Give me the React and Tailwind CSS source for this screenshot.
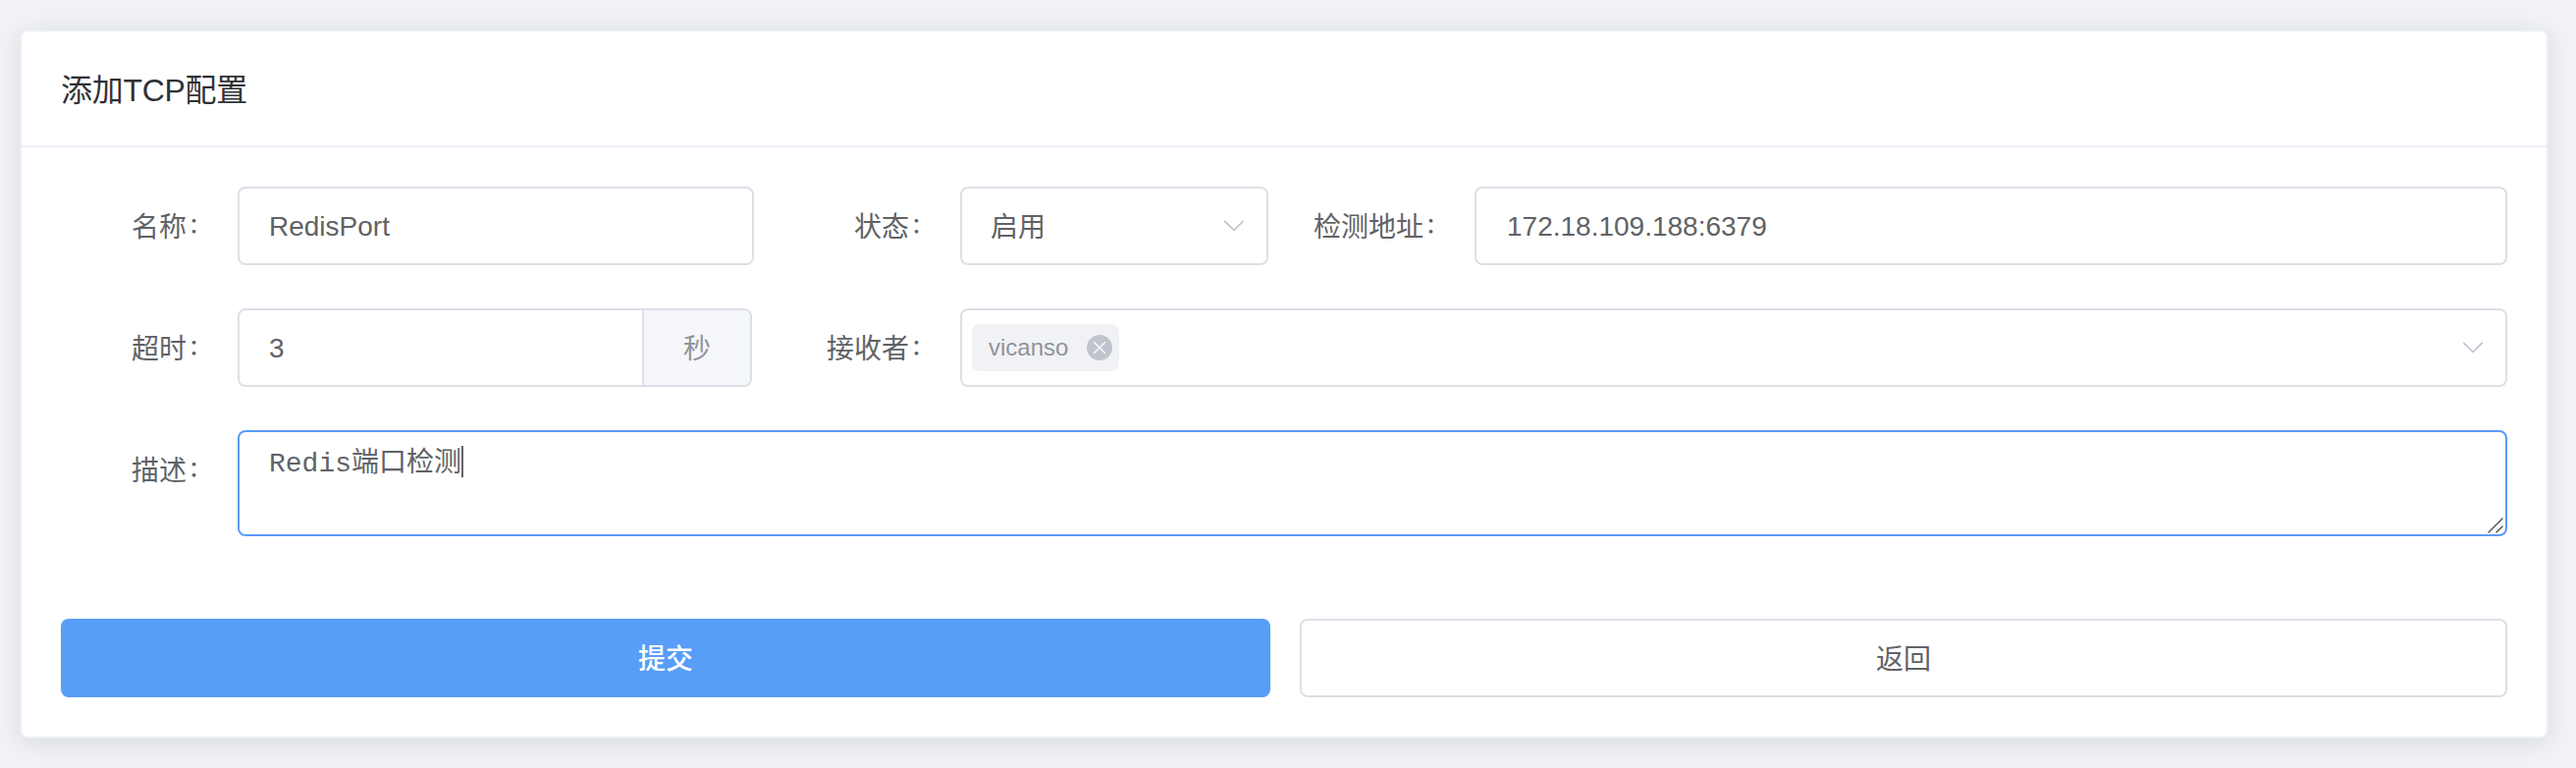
import React from "react";

const box = "h-20 rounded-lg border-2 border-[#dcdfe6] bg-white";

function Label({ className, children }) {
  return (
    <div className={`flex h-20 shrink-0 items-center justify-end pt-[3px] pr-6 ${className}`}>
      <span>{children}</span>
      <span className="w-7 pb-1 pl-0.5 text-[22px] font-medium">：</span>
    </div>
  );
}

function Chevron() {
  return (
    <svg className="h-7 w-7 shrink-0" viewBox="0 0 28 28" fill="none" stroke="#c0c4cc" strokeWidth="1.7" strokeLinecap="round" strokeLinejoin="round">
      <path d="M5.8 9.3 15 18.5l9.2-9.2" />
    </svg>
  );
}

export default function App() {
  return (
    <div className="h-[782px] w-[2624px] overflow-hidden bg-[#f0f2f5] pt-[30px] pl-5 font-['Liberation_Sans','Noto_Sans_CJK_SC',sans-serif] text-[28px] leading-10 text-[#606266]">
      <div className="h-[722px] w-[2576px] rounded-lg border-2 border-[#ebeef5] bg-white shadow-[0_4px_24px_0_rgba(0,0,0,0.1)]">
        <div className="flex h-[118px] items-center border-b-2 border-[#ebeef5] px-10 pt-[3px] text-[32px] tracking-[-0.3px] text-[#303133]">添加TCP配置</div>
        <div className="flex flex-col px-10 pt-10">
          <div className="flex">
            <Label className="w-[180px]">名称</Label>
            <div className={`${box} flex w-[526px] items-center px-[30px] pt-0.5`}>RedisPort</div>
            <Label className="w-[210px]">状态</Label>
            <div className={`${box} flex w-[314px] items-center justify-between pr-5 pl-[29px]`}>
              <span className="pt-[3px]">启用</span>
              <Chevron />
            </div>
            <Label className="w-[210px]">检测地址</Label>
            <div className={`${box} flex flex-1 items-center px-[31px] pt-0.5`}>172.18.109.188:6379</div>
          </div>

          <div className="mt-11 flex">
            <Label className="w-[180px]">超时</Label>
            <div className={`${box} flex w-[524px] overflow-hidden`}>
              <div className="flex flex-1 items-center px-[30px] pt-0.5">3</div>
              <div className="flex w-[110px] items-center justify-center border-l-2 border-[#dcdfe6] bg-[#f5f7fa] pt-[3px] text-[#909399]">秒</div>
            </div>
            <Label className="w-[212px]">接收者</Label>
            <div className={`${box} flex flex-1 items-center justify-between pr-5 pl-[10px]`}>
              <div className="flex h-12 w-[150px] items-center justify-between rounded-lg bg-[#f0f2f5] pr-[7px] pl-[17px] text-2xl text-[#909399]">
                <span>vicanso</span>
                <svg className="h-[26px] w-[26px]" viewBox="0 0 26 26">
                  <circle cx="13" cy="13" r="13" fill="#c0c4cc" />
                  <path d="m7.5 7.5 11 11M18.5 7.5l-11 11" stroke="#fff" strokeWidth="1.3" strokeLinecap="round" />
                </svg>
              </div>
              <Chevron />
            </div>
          </div>

          <div className="mt-11 flex">
            <Label className="w-[180px]">描述</Label>
            <div className="relative flex h-[108px] flex-1 items-start rounded-lg border-2 border-[#5a9cf8] bg-white px-[30px] pt-[10px] font-['Liberation_Mono','Noto_Sans_CJK_SC',monospace]">
              <span className="pt-0.5 leading-[42px]">Redis端口检测</span>
              <span className="mt-1 h-8 w-0.5 bg-[#606266]" />
              <svg className="absolute right-0.5 bottom-px h-4 w-4" viewBox="0 0 16 16" stroke="#555" strokeWidth="1.5" strokeLinecap="round">
                <path d="M1 15 15 1M9 15l6-6" />
              </svg>
            </div>
          </div>

          <div className="mt-[84px] flex gap-[30px]">
            <div className="flex h-20 w-[1232px] items-center justify-center rounded-lg bg-[#589df8] pt-[3px] font-medium text-white">提交</div>
            <div className={`${box} flex flex-1 items-center justify-center pt-[3px]`}>返回</div>
          </div>
        </div>
      </div>
    </div>
  );
}
